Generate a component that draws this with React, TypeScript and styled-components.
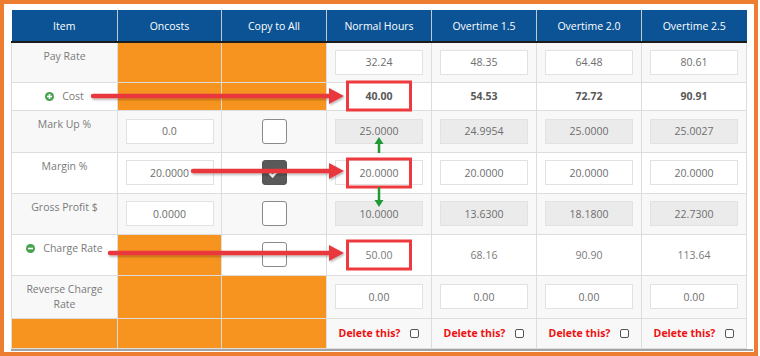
import React from 'react';
import styled, {createGlobalStyle} from 'styled-components';

const GlobalStyle = createGlobalStyle`
  body {
    margin: 0;
    background: #fff;
    font-family: "Open Sans", "Liberation Sans", sans-serif;
  }
`

const Frame = styled.div`
  box-sizing: border-box;
  width: 758px;
  height: 356px;
  border: 4px solid #ed7d31;
  padding: 6px 0 0 7px;
  background: #fff;
`
const Panel = styled.div`
  position: relative;
  width: 742px;
  border-bottom: 2px solid #a3a3a3;
`
const Table = styled.table`
  table-layout: fixed;
  border-collapse: collapse;
  width: 735px;
  font-size: 10.5px;
  color: #777;
`
const Col = styled.col<{ $w: number }>`
  width: ${p => p.$w}px;
`
const HeadCell = styled.th`
  height: 31px;
  padding: 0;
  background: #0b5394;
  color: #fff;
  font-weight: 400;
  text-align: center;
  border-left: 1px solid #c4c8cf;
  border-bottom: 2px solid #1c1c1c;
  &:first-child {
    border-left: none;
  }
`
const Row = styled.tr<{ $h: number; $striped?: boolean }>`
  height: ${p => p.$h}px;
  background: ${p => (p.$striped ? '#f8f8f8' : '#fff')};
`
const Cell = styled.td`
  position: relative;
  padding: 0;
  text-align: center;
  vertical-align: middle;
  border: 1px solid #dddddd;
`
const LabelCell = styled(Cell)`
  vertical-align: top;
  padding: 6px 6px 0;
  line-height: 15px;
  color: #7a7a7a;
`
const OrangeCell = styled(Cell)`
  background: #f7941f;
`
const ValueInput = styled.input<{ $locked?: boolean }>`
  box-sizing: border-box;
  width: 88px;
  height: 25px;
  padding: 0;
  border: 1px solid #e2e2e2;
  background: ${p => (p.$locked ? '#ebebeb' : '#fff')};
  font-family: inherit;
  font-size: 10.5px;
  color: #6e6e6e;
  text-align: center;
  outline: none;
`
const Strong = styled.span`
  font-weight: 700;
  color: #585858;
`
const Plain = styled.span`
  color: #7a7a7a;
`
const CheckBox = styled.span<{ $checked?: boolean }>`
  box-sizing: border-box;
  display: inline-flex;
  align-items: center;
  justify-content: center;
  width: 25px;
  height: 25px;
  vertical-align: middle;
  border-radius: 3px;
  border: 1px solid ${p => (p.$checked ? '#555' : '#8a8a8a')};
  background: ${p => (p.$checked ? '#595959' : '#fff')};
`
const Toggle = styled.span`
  display: inline-flex;
  align-items: center;
  gap: 8px;
`
const ToggleIcon = styled.svg`
  width: 9px;
  height: 9px;
  flex: none;
`
const DeleteWrap = styled.span`
  display: inline-flex;
  align-items: center;
  gap: 10px;
`
const DeleteLabel = styled.span`
  font-weight: 700;
  color: #ee1111;
`
const MiniCheck = styled.span`
  box-sizing: border-box;
  width: 9px;
  height: 9px;
  border: 1px solid #555;
  border-radius: 2px;
  background: #fff;
`
const Highlight = styled.span`
  position: absolute;
  left: 50%;
  top: 50%;
  box-sizing: border-box;
  width: 66px;
  height: 31px;
  transform: translate(-50%, -50%);
  border: 3px solid #ee3a3f;
  pointer-events: none;
`
const Annotations = styled.svg`
  position: absolute;
  left: 0;
  top: 0;
  overflow: visible;
  pointer-events: none;
`

const columns = [106, 104, 105, 105, 105, 105, 105]
const headers = ['Item', 'Oncosts', 'Copy to All', 'Normal Hours', 'Overtime 1.5', 'Overtime 2.0', 'Overtime 2.5']

const SignIcon = ({minus}: { minus?: boolean }) => (
    <ToggleIcon viewBox="0 0 10 10">
        <circle cx="5" cy="5" r="5" fill="#46a24e"/>
        <rect x="2.2" y="4.1" width="5.6" height="1.8" fill="#fff"/>
        {!minus && <rect x="4.1" y="2.2" width="1.8" height="5.6" fill="#fff"/>}
    </ToggleIcon>
)

const RedArrow = ({x1, x2, y}: { x1: number, x2: number, y: number }) => (
    <g filter="url(#shadow)">
        <line x1={x1} y1={y} x2={x2 - 12} y2={y} stroke="#e8383d" strokeWidth={4.5} strokeLinecap="round"/>
        <polygon points={`${x2},${y} ${x2 - 15},${y - 8} ${x2 - 15},${y + 8}`} fill="#e8383d"/>
    </g>
)

const GreenArrow = ({x, from, to}: { x: number, from: number, to: number }) => {
    const dir = to < from ? 1 : -1
    return (
        <g>
            <line x1={x} y1={from} x2={x} y2={to + dir * 5} stroke="#1f9a35" strokeWidth={2.5}/>
            <polygon points={`${x},${to} ${x - 4.5},${to + dir * 7} ${x + 4.5},${to + dir * 7}`} fill="#1f9a35"/>
        </g>
    )
}

const App = () => {
    const inputs = (values: string[], locked?: boolean) =>
        values.map((v, i) => (
            <Cell key={i}>
                <ValueInput readOnly value={v} $locked={locked}/>
            </Cell>
        ))

    return (
        <>
            <GlobalStyle/>
            <Frame>
                <Panel>
                    <Table>
                        <colgroup>
                            {columns.map((w, i) => <Col key={i} $w={w}/>)}
                        </colgroup>
                        <thead>
                        <tr>
                            {headers.map(h => <HeadCell key={h}>{h}</HeadCell>)}
                        </tr>
                        </thead>
                        <tbody>
                        <Row $h={40} $striped>
                            <LabelCell>Pay Rate</LabelCell>
                            <OrangeCell/>
                            <OrangeCell/>
                            {inputs(['32.24', '48.35', '64.48', '80.61'])}
                        </Row>
                        <Row $h={28}>
                            <LabelCell>
                                <Toggle><SignIcon/>Cost</Toggle>
                            </LabelCell>
                            <OrangeCell/>
                            <OrangeCell/>
                            <Cell><Strong>40.00</Strong><Highlight/></Cell>
                            <Cell><Strong>54.53</Strong></Cell>
                            <Cell><Strong>72.72</Strong></Cell>
                            <Cell><Strong>90.91</Strong></Cell>
                        </Row>
                        <Row $h={42} $striped>
                            <LabelCell>Mark Up %</LabelCell>
                            <Cell><ValueInput readOnly value="0.0"/></Cell>
                            <Cell><CheckBox/></Cell>
                            {inputs(['25.0000', '24.9954', '25.0000', '25.0027'], true)}
                        </Row>
                        <Row $h={41}>
                            <LabelCell>Margin %</LabelCell>
                            <Cell><ValueInput readOnly value="20.0000"/></Cell>
                            <Cell>
                                <CheckBox $checked>
                                    <svg width="14" height="14" viewBox="0 0 14 14">
                                        <path d="M2.5 7.2 L5.6 10.2 L11.5 3.6" fill="none" stroke="#fff"
                                              strokeWidth="2.6"/>
                                    </svg>
                                </CheckBox>
                            </Cell>
                            <Cell><ValueInput readOnly value="20.0000"/><Highlight/></Cell>
                            {inputs(['20.0000', '20.0000', '20.0000'])}
                        </Row>
                        <Row $h={41} $striped>
                            <LabelCell>Gross Profit $</LabelCell>
                            <Cell><ValueInput readOnly value="0.0000"/></Cell>
                            <Cell><CheckBox/></Cell>
                            {inputs(['10.0000', '13.6300', '18.1800', '22.7300'], true)}
                        </Row>
                        <Row $h={41}>
                            <LabelCell>
                                <Toggle><SignIcon minus/>Charge Rate</Toggle>
                            </LabelCell>
                            <OrangeCell/>
                            <Cell><CheckBox/></Cell>
                            <Cell><Plain>50.00</Plain><Highlight/></Cell>
                            <Cell><Plain>68.16</Plain></Cell>
                            <Cell><Plain>90.90</Plain></Cell>
                            <Cell><Plain>113.64</Plain></Cell>
                        </Row>
                        <Row $h={43} $striped>
                            <LabelCell>Reverse Charge Rate</LabelCell>
                            <OrangeCell/>
                            <OrangeCell/>
                            {inputs(['0.00', '0.00', '0.00', '0.00'])}
                        </Row>
                        <Row $h={30} $striped>
                            <OrangeCell/>
                            <OrangeCell/>
                            <OrangeCell/>
                            {[0, 1, 2, 3].map(i => (
                                <Cell key={i}>
                                    <DeleteWrap>
                                        <DeleteLabel>Delete this?</DeleteLabel>
                                        <MiniCheck/>
                                    </DeleteWrap>
                                </Cell>
                            ))}
                        </Row>
                        </tbody>
                    </Table>
                    <Annotations width="742" height="340">
                        <defs>
                            <filter id="shadow" x="-5%" y="-50%" width="110%" height="200%">
                                <feDropShadow dx="1" dy="1.5" stdDeviation="1" floodColor="#000" floodOpacity="0.3"/>
                            </filter>
                        </defs>
                        <RedArrow x1={82} x2={333} y={86}/>
                        <RedArrow x1={182} x2={333} y={161}/>
                        <RedArrow x1={99} x2={333} y={243}/>
                        <GreenArrow x={368} from={143} to={127}/>
                        <GreenArrow x={368} from={177} to={197}/>
                    </Annotations>
                </Panel>
            </Frame>
        </>
    );
};

export default App;
